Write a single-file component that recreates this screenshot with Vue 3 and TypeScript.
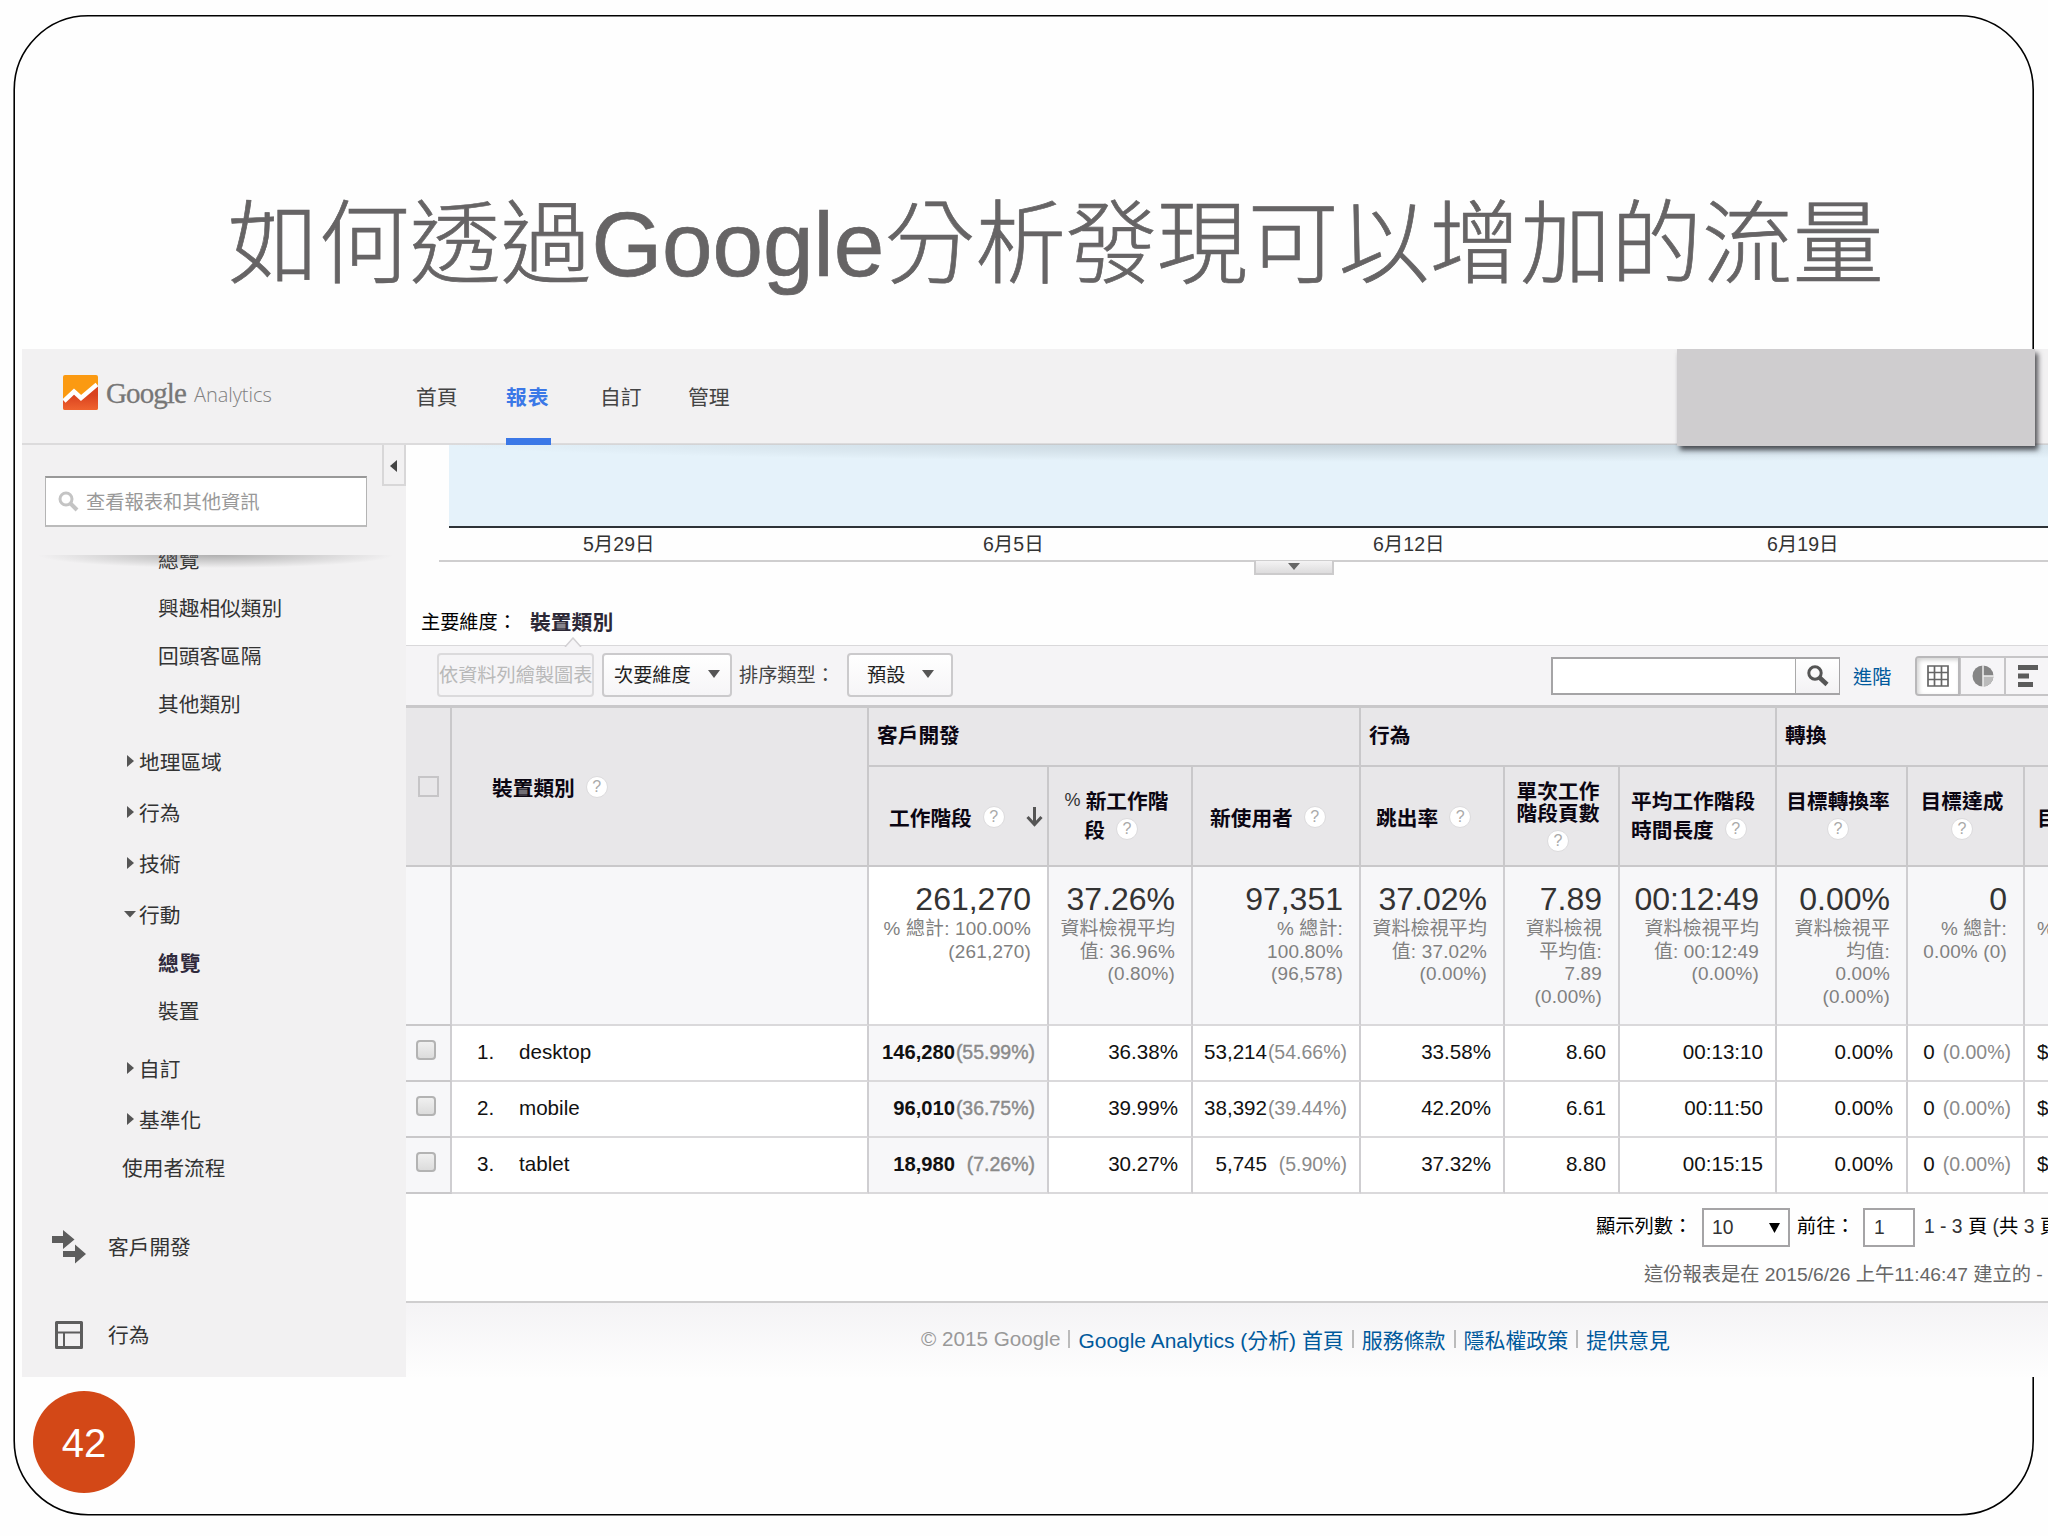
<script setup lang="ts">
interface NavItem {
  label: string
  kind: 'leaf' | 'closed' | 'open' | 'flow'
  gap?: number
  active?: boolean
}

interface Metric {
  lines: string[]
  help: 'inline' | 'below'
  sorted?: boolean
  total: string
  notes: string[]
}

const tabs = [
  { label: '首頁', width: 90 },
  { label: '報表', width: 94, active: true },
  { label: '自訂', width: 88 },
  { label: '管理', width: 60 },
]

const navItems: NavItem[] = [
  { label: '總覽', kind: 'leaf' },
  { label: '興趣相似類別', kind: 'leaf' },
  { label: '回頭客區隔', kind: 'leaf' },
  { label: '其他類別', kind: 'leaf' },
  { label: '地理區域', kind: 'closed', gap: 8 },
  { label: '行為', kind: 'closed' },
  { label: '技術', kind: 'closed' },
  { label: '行動', kind: 'open' },
  { label: '總覽', kind: 'leaf', gap: -1, active: true },
  { label: '裝置', kind: 'leaf' },
  { label: '自訂', kind: 'closed', gap: 8 },
  { label: '基準化', kind: 'closed' },
  { label: '使用者流程', kind: 'flow', gap: -1 },
]

const dates = ['5月29日', '6月5日', '6月12日', '6月19日']

const metrics: Metric[] = [
  { lines: ['工作階段'], help: 'inline', sorted: true, total: '261,270', notes: ['% 總計: 100.00%', '(261,270)'] },
  { lines: ['% 新工作階', '段'], help: 'inline', total: '37.26%', notes: ['資料檢視平均', '值: 36.96%', '(0.80%)'] },
  { lines: ['新使用者'], help: 'inline', total: '97,351', notes: ['% 總計:', '100.80%', '(96,578)'] },
  { lines: ['跳出率'], help: 'inline', total: '37.02%', notes: ['資料檢視平均', '值: 37.02%', '(0.00%)'] },
  { lines: ['單次工作', '階段頁數'], help: 'below', total: '7.89', notes: ['資料檢視', '平均值:', '7.89', '(0.00%)'] },
  { lines: ['平均工作階段', '時間長度'], help: 'inline', total: '00:12:49', notes: ['資料檢視平均', '值: 00:12:49', '(0.00%)'] },
  { lines: ['目標轉換率'], help: 'below', total: '0.00%', notes: ['資料檢視平', '均值:', '0.00%', '(0.00%)'] },
  { lines: ['目標達成'], help: 'below', total: '0', notes: ['% 總計:', '0.00% (0)'] },
]

const rows = [
  { name: 'desktop', cells: [['146,280', '(55.99%)'], ['36.38%'], ['53,214', '(54.66%)'], ['33.58%'], ['8.60'], ['00:13:10'], ['0.00%'], ['0', '(0.00%)']] },
  { name: 'mobile', cells: [['96,010', '(36.75%)'], ['39.99%'], ['38,392', '(39.44%)'], ['42.20%'], ['6.61'], ['00:11:50'], ['0.00%'], ['0', '(0.00%)']] },
  { name: 'tablet', cells: [['18,980', '(7.26%)'], ['30.27%'], ['5,745', '(5.90%)'], ['37.32%'], ['8.80'], ['00:15:15'], ['0.00%'], ['0', '(0.00%)']] },
]
</script>

<template>
  <div class="slide">
    <svg class="frame" width="2048" height="1536" viewBox="0 0 2048 1536">
      <rect x="14.200" y="15.800" width="2019" height="1499" rx="74" fill="none" stroke="#000" stroke-width="1.600" />
    </svg>
    <h1 class="title">如何透過<span class="latin">Google</span>分析發現可以增加的流量</h1>

    <div class="app">
      <header class="topbar">
        <svg class="logo" width="35" height="35" viewBox="0 0 35 35">
          <defs>
            <linearGradient id="lower" x1="0" y1="0" x2="0" y2="1">
              <stop offset="0.4" stop-color="#d9421f" />
              <stop offset="1" stop-color="#f0632f" />
            </linearGradient>
          </defs>
          <rect width="35" height="35" rx="2" fill="#fb9a12" />
          <path d="M0 25L11 17L18 23L35 10V33a2 2 0 0 1-2 2H2a2 2 0 0 1-2-2z" fill="url(#lower)" />
          <path d="M1 26L11 16.500L18 23L34 9.500" fill="none" stroke="#fff" stroke-width="4.500" />
        </svg>
        <span class="brand">Google</span>
        <span class="product">Analytics</span>
        <nav class="tabs">
          <div v-for="t in tabs" :key="t.label" class="tab" :class="{ active: t.active }" :style="{ width: t.width + 'px' }">
            <span>{{ t.label }}</span>
          </div>
        </nav>
        <div class="mask"></div>
      </header>

      <div class="body">
        <aside class="sidebar">
          <div class="collapse">
            <svg width="8" height="12" viewBox="0 0 8 12"><path d="M7 0V12L0 6z" fill="#444" /></svg>
          </div>
          <div class="search">
            <svg width="21" height="21" viewBox="0 0 21 21">
              <circle cx="8" cy="8" r="6" fill="none" stroke="#c4c4c4" stroke-width="3" />
              <path d="M12.500 12.500L19 19" stroke="#c4c4c4" stroke-width="4" />
            </svg>
            <span>查看報表和其他資訊</span>
          </div>
          <div class="scroll">
            <div class="scroll-shadow"></div>
            <ul class="nav">
              <li
                v-for="(n, i) in navItems"
                :key="i"
                :class="[n.kind, { active: n.active }]"
                :style="{ marginTop: (n.gap ?? 0) + 'px' }"
              >
                <svg v-if="n.kind === 'closed'" class="tri" width="13" height="12" viewBox="0 0 13 12"><path d="M3 0V12L10 6z" fill="#555" /></svg>
                <svg v-if="n.kind === 'open'" class="tri" width="13" height="12" viewBox="0 0 13 12"><path d="M0 3H12L6 9.500z" fill="#555" /></svg>
                {{ n.label }}
              </li>
            </ul>
            <div class="section">
              <svg width="34" height="34" viewBox="0 0 34 34">
                <path d="M0 6H11V0L22.500 9.500L11 19V13H0zM11 21H23V14.500L34 24L23 33.500V27H11z" fill="#5d5d5d" />
              </svg>
              <span>客戶開發</span>
            </div>
            <div class="section">
              <svg width="34" height="34" viewBox="0 0 34 34">
                <path d="M4.500 4.500H29.500V29.500H4.500z" fill="none" stroke="#5d5d5d" stroke-width="3" stroke-linejoin="round" />
                <path d="M4 14.500H30M12 14.500V30" fill="none" stroke="#5d5d5d" stroke-width="2" />
              </svg>
              <span>行為</span>
            </div>
          </div>
        </aside>

        <main class="main">
          <div class="chart"></div>
          <div class="dates">
            <span v-for="d in dates" :key="d">{{ d }}</span>
          </div>
          <div class="divider">
            <div class="handle"><svg width="12" height="7" viewBox="0 0 12 7"><path d="M0 0H12L6 7z" fill="#666" /></svg></div>
          </div>

          <div class="dimension">
            <span class="dim-label">主要維度：</span>
            <span class="dim-value">裝置類別<svg class="notch" width="18" height="10" viewBox="0 0 18 10"><path d="M1 10L9 1L17 10" fill="#f5f4f6" stroke="#d2d0d3" stroke-width="1.500" /></svg></span>
          </div>

          <div class="toolbar">
            <button class="btn off">依資料列繪製圖表</button>
            <button class="btn second">次要維度<i class="caret"></i></button>
            <span class="sort">排序類型：</span>
            <button class="btn preset">預設<i class="caret"></i></button>
            <div class="filter">
              <div class="field"></div>
              <div class="go">
                <svg width="24" height="22" viewBox="0 0 24 22">
                  <circle cx="9" cy="8" r="6.200" fill="none" stroke="#555" stroke-width="3" />
                  <path d="M13.500 12.500L21 19.500" stroke="#555" stroke-width="4.500" />
                </svg>
              </div>
            </div>
            <a class="advanced">進階</a>
            <div class="views">
              <div class="view on">
                <svg width="22" height="22" viewBox="0 0 22 22"><path d="M1 1H21V21H1zM1 7.500H21M1 14.500H21M7.500 1V21M14.500 1V21" fill="#fff" stroke="#666" stroke-width="1.700" /></svg>
              </div>
              <div class="view">
                <svg width="22" height="22" viewBox="0 0 22 22">
                  <circle cx="11" cy="11" r="10.500" fill="#858585" />
                  <path d="M11 11H21.500A10.500 10.500 0 0 1 11 21.500z" fill="#bbb" />
                  <path d="M11 0V22M11 11H22" stroke="#eee" stroke-width="1.500" />
                </svg>
              </div>
              <div class="view">
                <svg width="22" height="22" viewBox="0 0 22 22"><path d="M1 0H21V5H1zM1 8.500H12V13.500H1zM1 17H16V22H1z" fill="#5c5c5c" /></svg>
              </div>
            </div>
          </div>

          <div class="grid head">
            <div class="cell check tall"><i class="box-flat"></i></div>
            <div class="cell dimcell tall">裝置類別<i class="help">?</i></div>
            <div class="cell group g1">客戶開發</div>
            <div class="cell group g2">行為</div>
            <div class="cell group g3">轉換</div>
            <div v-for="(m, i) in metrics" :key="i" class="cell metric" :class="['m' + i, { stacked: m.lines.length > 1 && m.help === 'below', two: m.lines.length > 1 || m.help === 'below' }]">
              <div v-for="(l, j) in m.lines" :key="l" class="hline">
                <template v-if="l.startsWith('%')"><span class="pct">% </span>{{ l.slice(2) }}</template>
                <template v-else>{{ l }}</template>
                <i v-if="m.help === 'inline' && j === m.lines.length - 1" class="help">?</i>
                <svg v-if="m.sorted" class="arrow" width="17" height="20" viewBox="0 0 17 20"><path d="M8.500 0V17M1.500 10L8.500 17.500L15.500 10" fill="none" stroke="#555" stroke-width="3" /></svg>
              </div>
              <div v-if="m.help === 'below'" class="hline"><i class="help solo">?</i></div>
            </div>
            <div class="cell metric last">目</div>
          </div>

          <div class="grid summary">
            <div class="cell first"></div>
            <div class="cell"></div>
            <div v-for="(m, i) in metrics" :key="i" class="cell total" :class="{ lit: m.sorted }">
              <div class="big">{{ m.total }}</div>
              <div v-for="n in m.notes" :key="n" class="note">{{ n }}</div>
            </div>
            <div class="cell total cut"><div class="big">&nbsp;</div><div class="note">%</div></div>
          </div>

          <div v-for="(r, i) in rows" :key="r.name" class="grid row">
            <div class="cell check"><i class="box"></i></div>
            <div class="cell name"><span class="idx">{{ i + 1 }}.</span>{{ r.name }}</div>
            <div v-for="(c, j) in r.cells" :key="j" class="cell value" :class="{ sorted: j === 0, inset: j === 1 || j === 6 }">
              <span class="num">{{ c[0] }}</span><span v-if="c[1]" class="share" :class="{ wide: j !== 7 }">{{ c[1] }}</span>
            </div>
            <div class="cell value cut">$</div>
          </div>

          <div class="pager">
            <span class="show">顯示列數：</span>
            <span class="select">10<svg width="11" height="10" viewBox="0 0 11 10"><path d="M0 0H11L5.500 10z" fill="#000" /></svg></span>
            <span class="goto">前往：</span>
            <span class="page">1</span>
            <span class="range"><span class="lat">1 - 3</span> 頁 <span class="lat">(</span>共 <span class="lat">3</span> 頁</span>
          </div>
          <div class="created">這份報表是在 2015/6/26 上午11:46:47 建立的 -</div>

          <footer class="footer">
            <span>© 2015 Google</span><b></b><a>Google Analytics (分析) 首頁</a><b></b><a>服務條款</a><b></b><a>隱私權政策</a><b></b><a>提供意見</a>
          </footer>
        </main>
      </div>
    </div>

    <div class="number">42</div>
  </div>
</template>

<style>
html,
body {
  background: #fefefe;
  overflow: hidden;
}
</style>

<style scoped>
.slide {
  position: relative;
  width: 2048px;
  height: 1536px;
  overflow: hidden;
  background: #fefefe;
  font-family: 'Liberation Sans', 'Noto Sans CJK TC', sans-serif;
  color: #222;
}
.slide * {
  box-sizing: border-box;
}
.frame {
  position: absolute;
  left: 0;
  top: 0;
}
.title {
  margin: 0;
  padding: 191px 0 0 228px;
  height: 349px;
  font-size: 90.850px;
  line-height: 108px;
  font-weight: 300;
  color: #666465;
  white-space: nowrap;
  -webkit-text-stroke: 0.700px #666465;
}
.title .latin {
  font-weight: 400;
}
.app {
  position: relative;
  margin-left: 22px;
  width: 2026px;
  height: 1028px;
  overflow: hidden;
  background: #fefefe;
}

/* top bar */
.topbar {
  position: relative;
  z-index: 3;
  display: flex;
  height: 96px;
  background: #f2f1f2;
  border-bottom: 2px solid #dcdbdc;
}
.topbar::after {
  content: '';
  position: absolute;
  left: 430px;
  right: 0;
  top: 95px;
  height: 20px;
  background: radial-gradient(ellipse 1000px 18px at 62% 0, rgba(100, 115, 125, 0.28), rgba(120, 130, 140, 0) 100%);
}
.logo {
  margin: 26px 0 0 41px;
  flex: none;
}
.brand {
  width: 88px;
  margin-left: 8px;
  font: 29px/40px 'Liberation Serif', serif;
  letter-spacing: -0.900px;
  padding-top: 24px;
  color: #777;
  -webkit-text-stroke: 0.300px #777;
}
.product {
  width: 93px;
  font: 300 20px/40px 'Open Sans', sans-serif;
  letter-spacing: -0.050px;
  padding-top: 26px;
  color: #808080;
}
.tabs {
  display: flex;
  margin-left: 129px;
}
.tab {
  font-size: 20.800px;
  line-height: 97px;
  color: #444;
}
.tab span {
  display: inline-block;
  height: 96px;
}
.tab.active span {
  width: 45px;
  color: #3b78e7;
  font-weight: 700;
  letter-spacing: 1px;
  border-bottom: 7px solid #3b78e7;
}
.mask {
  position: absolute;
  z-index: 2;
  left: 1655px;
  top: 0;
  width: 358px;
  height: 97px;
  background: #cfcdcf;
  box-shadow: 3px 4px 5px rgba(30, 30, 35, 0.75);
}

.body {
  display: flex;
  height: 932px;
}

/* sidebar */
.sidebar {
  position: relative;
  width: 384px;
  flex: none;
  background: #f2f1f2;
  padding-top: 31px;
}
.collapse {
  position: absolute;
  right: 0;
  top: 0;
  width: 24px;
  height: 41px;
  border: 2px solid #d8d7d8;
  border-top: 0;
  display: flex;
  align-items: center;
  justify-content: center;
  padding: 2px 1px 0 0;
}
.search {
  display: flex;
  align-items: center;
  margin-left: 23px;
  width: 322px;
  height: 51px;
  background: #fff;
  border: 1px solid #b4b4b4;
  border-top: 2px solid #999;
  border-bottom: 2px solid #bbb;
  padding-left: 12px;
  font-size: 19.300px;
  color: #999;
}
.search svg {
  margin-right: 7px;
}
.search span {
  margin-top: -2px;
}
.scroll {
  position: relative;
  margin-top: 28px;
  height: 822px;
  overflow: hidden;
}
.scroll-shadow {
  position: absolute;
  left: 16px;
  top: 0;
  width: 356px;
  height: 13px;
  background: radial-gradient(ellipse 178px 13px at 50% 0, rgba(110, 110, 110, 0.5), rgba(120, 120, 120, 0));
}
.nav {
  list-style: none;
  margin: -20px 0 0;
  padding: 0;
  font-size: 20.700px;
  color: #333;
}
.nav li {
  display: flex;
  align-items: center;
  height: 48px;
  padding-left: 136px;
  white-space: nowrap;
}
.nav li.closed,
.nav li.open {
  height: 51px;
  padding-left: 102px;
}
.nav li.flow {
  padding-left: 100px;
}
.nav li.active {
  font-weight: 700;
  color: #302a3c;
  letter-spacing: 1px;
}
.tri {
  margin-right: 2px;
}
.section {
  display: flex;
  align-items: center;
  height: 88px;
  padding-left: 30px;
  font-size: 20.700px;
  color: #333;
}
.nav + .section {
  margin-top: 12px;
}
.section span {
  margin-left: 22px;
  margin-top: -2px;
}

/* report */
.main {
  width: 1800px;
  flex: none;
}
.chart {
  margin-left: 43px;
  height: 83px;
  background: #e5f2fa;
  border-bottom: 2px solid #2e3338;
}
.dates {
  display: flex;
  height: 32px;
  padding-left: 177px;
  font-size: 19.500px;
  line-height: 32px;
  color: #333;
}
.dates span {
  width: 400px;
}
.dates span:nth-child(2) {
  width: 390px;
}
.dates span:nth-child(3) {
  width: 394px;
}
.divider {
  margin-left: 33px;
  height: 14px;
  border-top: 2px solid #cfcecf;
}
.handle {
  position: relative;
  top: -1px;
  margin-left: 815px;
  width: 80px;
  height: 14px;
  padding-bottom: 1px;
  background: linear-gradient(#f4f3f4, #dddcdd);
  border: 2px solid #cccbcc;
  border-top: 0;
  display: flex;
  justify-content: center;
  align-items: center;
}
.dimension {
  display: flex;
  align-items: flex-end;
  height: 71px;
  padding: 0 0 6px 15px;
  line-height: 32px;
}
.dim-label {
  width: 109px;
  font-size: 19.200px;
  color: #000;
}
.dim-value {
  position: relative;
  font-size: 20.800px;
  font-weight: 700;
  color: #2c2836;
}
.notch {
  position: absolute;
  left: 34px;
  bottom: -8px;
}
.toolbar {
  display: flex;
  align-items: center;
  height: 60px;
  border-top: 1px solid #d9d8da;
  background: #f5f4f6;
  padding-left: 31px;
  font-size: 19.200px;
}
.btn {
  display: flex;
  align-items: center;
  height: 44px;
  flex: none;
  margin: -1px 0 0;
  padding: 0 0 2px;
  font: inherit;
  border: 2px solid #cbcacc;
  border-radius: 4px;
  background: linear-gradient(#fff, #f6f5f7);
  color: #222;
  white-space: nowrap;
}
.btn.off {
  width: 157px;
  border-color: #dbdadc;
  background: #f5f4f6;
  color: #b9b9b9;
}
.btn.second {
  width: 130px;
  margin-left: 8px;
  padding-left: 10px;
}
.btn.preset {
  width: 106px;
  margin-left: 10px;
  padding-left: 18px;
}
.caret {
  border: 6px solid transparent;
  border-top: 8px solid #555;
  border-bottom: 0;
  margin-left: 17px;
}
.sort {
  margin: -3px 0 0 7px;
  width: 98px;
  color: #444;
}
.filter {
  display: flex;
  margin-left: 598px;
  height: 38px;
  width: 289px;
  border: 2px solid #a5a4a6;
  border-right-width: 1px;
}
.field {
  width: 244px;
  background: #fff;
  border-right: 1px solid #aaa;
}
.go {
  width: 43px;
  display: flex;
  align-items: center;
  justify-content: center;
  background: linear-gradient(#fff, #f3f2f4);
}
.advanced {
  margin: -2px 0 0 13px;
  width: 62px;
  color: #00599c;
  padding-top: 2px;
}
.views {
  display: flex;
}
.view {
  width: 45px;
  height: 40px;
  border: 2px solid #c6c5c7;
  border-left-width: 1px;
  border-right-width: 1px;
  display: flex;
  align-items: center;
  justify-content: center;
  background: #f6f5f7;
}
.view.on {
  border: 2px solid #b9b8ba;
  border-radius: 4px 0 0 4px;
  background: #fff;
  box-shadow: inset 2px 2px 4px rgba(0, 0, 0, 0.18);
}
.view:last-child {
  width: 60px;
  justify-content: flex-start;
  padding-left: 11px;
}

/* table */
.grid {
  display: grid;
  grid-template-columns: 46px 417px 180px 144px 168px 144px 115px 157px 131px 117px 174px;
}
.cell {
  border-right: 2px solid #cfced1;
  border-bottom: 2px solid #dad9db;
  overflow: hidden;
  white-space: nowrap;
}
.head {
  grid-template-rows: 59px 100px;
  border-top: 3px solid #c9c8ca;
  background: #e8e7e9;
  font-size: 20.700px;
  font-weight: 700;
  color: #0b0612;
}
.head .cell {
  border-bottom-color: #c9c8ca;
  border-right-color: #c9c8ca;
}
.head .tall {
  grid-row: 1 / 3;
}
.check {
  display: flex;
  align-items: center;
  padding-left: 12px;
}
.box-flat {
  width: 21px;
  height: 21px;
  border: 2px solid #c6c5c7;
}
.dimcell {
  display: flex;
  align-items: center;
  padding-left: 40px;
}
.group {
  line-height: 56px;
  padding-left: 8px;
}
.g1 {
  grid-column: 3 / 6;
}
.g2 {
  grid-column: 6 / 9;
}
.g3 {
  grid-column: 9 / 12;
}
.metric {
  grid-row: 2;
  display: flex;
  flex-direction: column;
  justify-content: center;
  padding-top: 2px;
}
.hline {
  display: flex;
  align-items: center;
  justify-content: center;
  height: 28px;
}
.two {
  padding-top: 0;
  padding-bottom: 3px;
}
.two .hline {
  height: 29px;
}
.pct {
  font-weight: 400;
  font-size: 18px;
  white-space: pre;
  color: #333;
}
.m0 .hline {
  justify-content: flex-start;
  padding-left: 20px;
}
.m1 .hline {
  padding-right: 7px;
}
.m1 .hline:last-child {
  padding-right: 18px;
}
.m2 .hline,
.m3 .hline {
  justify-content: flex-start;
  padding-left: 17px;
}
.m3 .hline {
  padding-left: 15px;
}
.m4 .hline,
.m6 .hline,
.m7 .hline {
  padding-right: 7px;
}
.stacked .hline {
  height: 22px;
}
.stacked .hline:last-child {
  height: 36px;
}
.stacked {
  padding-top: 5px;
  padding-bottom: 0;
}
.m5 .hline {
  justify-content: flex-start;
  padding-left: 11px;
}
.help {
  display: inline-flex;
  flex: none;
  align-items: center;
  justify-content: center;
  width: 22px;
  height: 22px;
  border-radius: 50%;
  margin-left: 11px;
  background: #fff;
  border: 1px solid #dcdbdd;
  font: 400 16px/20px 'Liberation Sans', sans-serif;
  color: #aaa;
}
.help.solo {
  margin-left: 0;
}
.arrow {
  margin-left: 21px;
  flex: none;
}
.head .last {
  padding-left: 12px;
}
.summary {
  height: 159px;
  background: #f7f7f9;
}
.total {
  padding: 14px 16px 0 0;
  text-align: right;
}
.lit {
  background: #fff;
}
.big {
  font-size: 32px;
  line-height: 36px;
  color: #333;
  margin-bottom: 1px;
}
.note {
  font-size: 18.900px;
  letter-spacing: 0.200px;
  line-height: 22.500px;
  color: #808080;
}
.cut {
  text-align: left;
  padding-left: 12px;
}
.row {
  height: 56px;
  font-size: 20.600px;
  line-height: 52px;
  color: #111;
  background: #fff;
}
.row .check {
  padding-left: 10px;
  background: #f7f7f9;
}
.row .check,
.summary .first {
  border-bottom-color: #c9c8ca;
}
.box {
  width: 20px;
  height: 20px;
  margin-bottom: 6px;
  border: 2px solid #b3b3b3;
  border-radius: 4px;
  background: linear-gradient(#f0f0f0, #dcdcdc);
}
.name {
  display: flex;
  padding-left: 25px;
}
.idx {
  width: 42px;
}
.value {
  display: flex;
  justify-content: flex-end;
  padding-right: 12px;
}
.value.inset {
  padding-right: 13px;
}
.value.sorted {
  background: #f7f7f9;
}
.sorted .num {
  font-weight: 700;
  font-size: 20.200px;
}
.share {
  font-size: 19.500px;
  color: #8a8a8a;
  text-align: right;
  margin-left: 8px;
}
.share.wide {
  width: 80px;
  margin-left: 0;
}
.sorted .share {
  -webkit-text-stroke: 0.400px #8a8a8a;
}
.value.cut {
  justify-content: flex-start;
}

.pager {
  display: flex;
  align-items: center;
  margin-top: 14px;
  height: 39px;
  padding-left: 1190px;
  font-size: 19.300px;
  color: #000;
  white-space: nowrap;
}
.pager > span {
  flex: none;
}
.show {
  width: 106px;
  padding-bottom: 5px;
}
.select,
.page {
  display: flex;
  align-items: center;
  height: 39px;
  border: 2px solid #a5a4a6;
  background: #fff;
  color: #333;
}
.select {
  width: 88px;
  padding: 0 8px;
  justify-content: space-between;
}
.goto {
  width: 66px;
  margin-left: 7px;
  padding-bottom: 5px;
}
.page {
  width: 52px;
  padding-left: 9px;
}
.range {
  margin-left: 9px;
  padding-bottom: 5px;
}
.range .lat {
  color: #333;
}
.created {
  height: 54px;
  padding: 12px 0 0 1238px;
  font-size: 19.250px;
  line-height: 31px;
  color: #666;
  white-space: nowrap;
}
.footer {
  display: flex;
  align-items: center;
  height: 79px;
  padding: 0 0 6px 515px;
  border-top: 2px solid #cfcecf;
  background: linear-gradient(#f4f3f5, #fefefe);
  font-size: 20.700px;
  color: #999;
  white-space: nowrap;
}
.footer a {
  color: #00599c;
  font-size: 20.950px;
}
.footer b {
  width: 2px;
  height: 18px;
  margin: 0 8px;
  background: #bbb;
}

.number {
  position: absolute;
  left: 33px;
  top: 1391px;
  width: 102px;
  height: 102px;
  border-radius: 50%;
  background: #d34817;
  color: #fff;
  font-size: 40px;
  line-height: 104px;
  text-align: center;
}
</style>
